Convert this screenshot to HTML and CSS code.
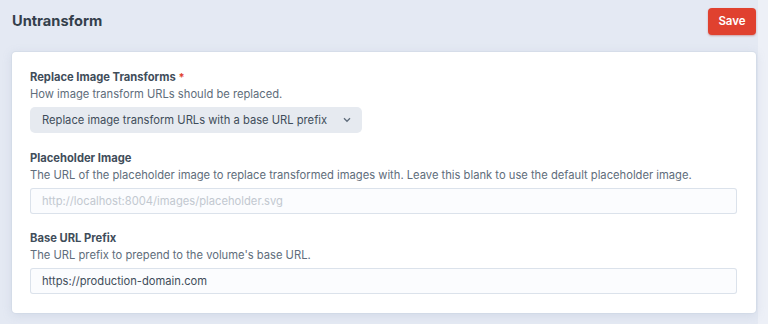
FILE: index.html
```html
<!DOCTYPE html>
<html lang="en">
<head>
  <meta charset="UTF-8" />
  <meta name="viewport" content="width=device-width, initial-scale=1" />
  <title>Untransform</title>
  <link rel="stylesheet" href="styles.css">
</head>
<body>
  <div class="page">
    <header class="page-header">
      <h1>Untransform</h1>
      <button class="btn-save" type="button">Save</button>
    </header>

    <div class="card">
      <div class="field">
        <label class="field-label">Replace Image Transforms <span class="required">*</span></label>
        <div class="field-hint">How image transform URLs should be replaced.</div>
        <div class="select">
          <span>Replace image transform URLs with a base URL prefix</span>
          <svg width="10" height="6" viewBox="0 0 10 6"><path d="M2 1.3 5 4.3 8 1.3" fill="none" stroke="#5f6c7b" stroke-width="1.3"/></svg>
        </div>
      </div>

      <div class="field">
        <label class="field-label">Placeholder Image</label>
        <div class="field-hint">The URL of the placeholder image to replace transformed images with. Leave this blank to use the default placeholder image.</div>
        <input class="text-input" type="text" placeholder="http://localhost:8004/images/placeholder.svg" />
      </div>

      <div class="field field-last">
        <label class="field-label">Base URL Prefix</label>
        <div class="field-hint">The URL prefix to prepend to the volume's base URL.</div>
        <input class="text-input" type="text" value="https://production-domain.com" />
      </div>
    </div>
  </div>
</body>
</html>
```

FILE: styles.css
```css
:root {
  --bg: #e4e9f3;
  --card: #ffffff;
  --text: #3f4d5a;
  --hint: #606d7b;
  --red: #e0412f;
  --input-border: rgba(96, 125, 159, 0.2);
}

* {
  box-sizing: border-box;
}

body {
  margin: 0;
  background: linear-gradient(to right, var(--bg) 758px, #edf0f7 758px);
  font-family: Inter, "Noto Sans", sans-serif;
  color: var(--text);
}

.page {
  width: 768px;
  height: 324px;
  padding: 0 12px;
}

.page-header {
  display: flex;
  justify-content: space-between;
  align-items: center;
  height: 41px;
}

h1 {
  margin: 0;
  font-size: 14.6px;
  font-weight: 700;
  color: #343f4b;
}

.btn-save {
  background: var(--red);
  color: #fff;
  border: none;
  border-radius: 4px;
  font-family: inherit;
  font-size: 11.5px;
  font-weight: 600;
  width: 48px;
  height: 27px;
  margin-top: 1px;
  box-shadow: 0 1px 2px rgba(160, 30, 20, 0.35);
}

.card {
  margin-top: 11px;
  background: var(--card);
  border-radius: 4px;
  box-shadow: 0 0 0 1px rgba(205, 216, 228, 0.5), 0 2px 10px rgba(150, 165, 190, 0.25);
  padding: 17px 19px 19px 18px;
}

.field + .field {
  margin-top: 17px;
}

.field-last {
  margin-top: 16px !important;
}

.field-label {
  display: block;
  font-size: 11.2px;
  font-weight: 700;
  line-height: 16px;
  color: #3f4d5a;
}

.required {
  color: #e0412f;
  font-size: 11px;
}

.field-hint {
  font-size: 11.2px;
  line-height: 18px;
  color: var(--hint);
  margin-bottom: 4px;
}

.select {
  display: inline-flex;
  align-items: center;
  gap: 15px;
  height: 26px;
  padding: 0 10px 0 12px;
  background: #e6eaf0;
  border-radius: 5px;
  font-size: 11.2px;
  color: #3f4d5a;
}

.text-input {
  display: block;
  width: 100%;
  height: 26px;
  padding: 0 11px;
  border: 1px solid var(--input-border);
  border-radius: 3px;
  background: #fbfcfe;
  font-family: inherit;
  font-size: 11.2px;
  color: #3f4d5a;
}

.text-input::placeholder {
  color: #c2c8d0;
}
```
